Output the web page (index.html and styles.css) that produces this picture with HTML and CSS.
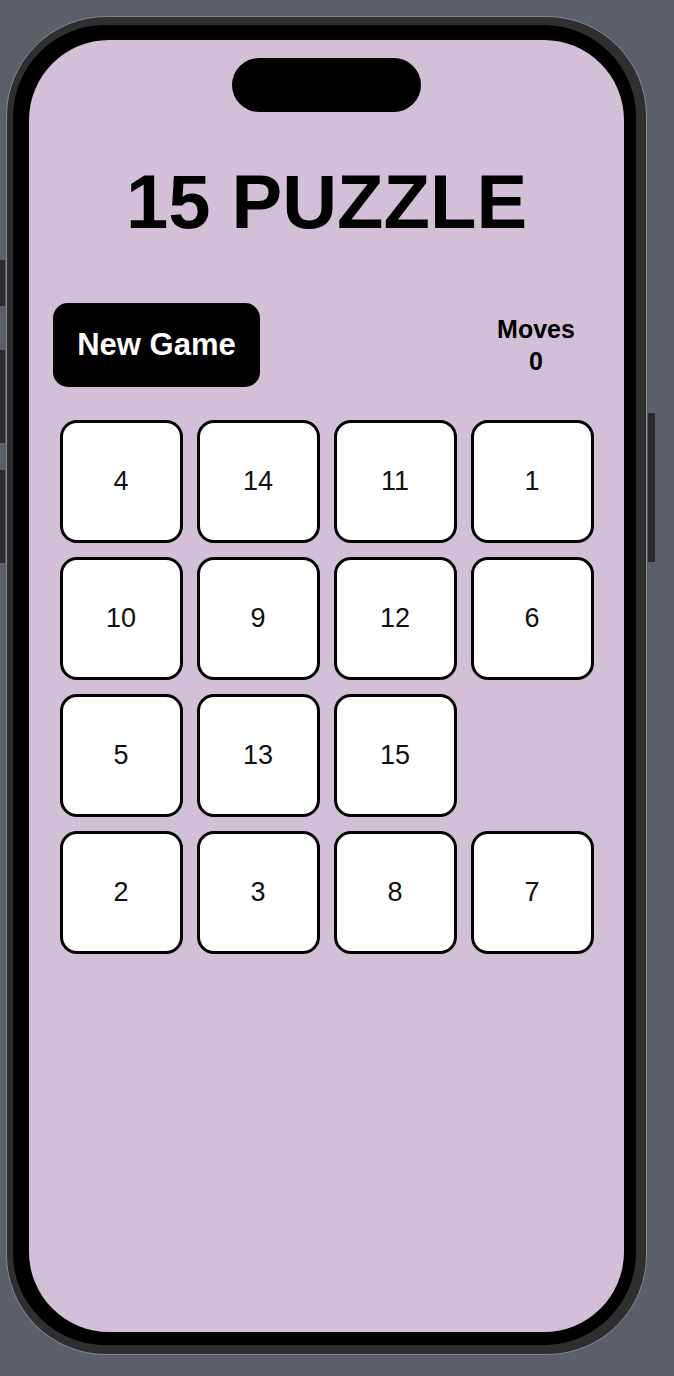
FILE: index.html
```html
<!DOCTYPE html>
<html lang="en">
<head>
  <meta charset="UTF-8">
  <meta name="viewport" content="width=device-width, initial-scale=1.0">
  <title>15 Puzzle</title>
  <link rel="stylesheet" href="styles.css">
</head>
<body>
  <div class="phone">
    <!-- side buttons -->
    <span class="side-btn left-1"></span>
    <span class="side-btn left-2"></span>
    <span class="side-btn left-3"></span>
    <span class="side-btn right-1"></span>

    <div class="bezel">
      <div class="screen">
        <div class="island"></div>

        <h1 class="title">15 PUZZLE</h1>

        <div class="top-row">
          <button class="new-game">New Game</button>
          <div class="moves">
            <div>Moves</div>
            <div>0</div>
          </div>
        </div>

        <div class="board">
          <div class="tile">4</div>
          <div class="tile">14</div>
          <div class="tile">11</div>
          <div class="tile">1</div>
          <div class="tile">10</div>
          <div class="tile">9</div>
          <div class="tile">12</div>
          <div class="tile">6</div>
          <div class="tile">5</div>
          <div class="tile">13</div>
          <div class="tile">15</div>
          <div class="tile empty"></div>
          <div class="tile">2</div>
          <div class="tile">3</div>
          <div class="tile">8</div>
          <div class="tile">7</div>
        </div>
      </div>
    </div>
  </div>
</body>
</html>
```

FILE: styles.css
```css
body {
  margin: 0;
  background-color: #5b5f67;
  font-family: "Liberation Sans", Arial, sans-serif;
}
.phone {
  position: relative;
  box-sizing: border-box;
  width: 641px;
  height: 1339px;
  margin: 16px 0 0 6px;
  padding: 8px 10px 9px 6px;
  background-color: #2f2f31;
  border: 1px solid #85888e;
  border-radius: 100px;
}
.bezel {
  box-sizing: border-box;
  height: 100%;
  padding: 15px 12px 13px 16px;
  background-color: #000;
  border-radius: 92px;
}
.screen {
  height: 100%;
  background-color: #d3bfd7;
  border-radius: 80px;
  overflow: hidden;
}
.side-btn {
  position: absolute;
  width: 5px;
  background-color: #2c2c2e;
}
.left-1 { left: -7px; top: 243px; height: 46px; }
.left-2 { left: -7px; top: 333px; height: 93px; }
.left-3 { left: -7px; top: 453px; height: 93px; }
.right-1 { right: -9px; top: 396px; height: 149px; width: 7px; }

.island {
  width: 189px;
  height: 54px;
  margin: 18px auto 0;
  background-color: #000;
  border-radius: 27px;
}
.title {
  margin: 52px 0 0;
  font-size: 76px;
  line-height: 76px;
  font-weight: bold;
  text-align: center;
  color: #000;
}
.top-row {
  display: flex;
  justify-content: space-between;
  align-items: center;
  padding: 0 24px;
  margin-top: 63px;
}
.new-game {
  width: 207px;
  height: 84px;
  padding: 0;
  background-color: #000;
  color: #fff;
  border: none;
  border-radius: 15px;
  font-family: inherit;
  font-size: 31px;
  font-weight: bold;
  cursor: pointer;
}
.moves {
  width: 128px;
  text-align: center;
  font-size: 25px;
  line-height: 32px;
  font-weight: bold;
  color: #000;
}
.board {
  display: grid;
  grid-template-columns: repeat(4, 123px);
  grid-auto-rows: 123px;
  gap: 14px;
  justify-content: center;
  margin-top: 33px;
}
.tile {
  display: flex;
  align-items: center;
  justify-content: center;
  box-sizing: border-box;
  background-color: #fff;
  border: 3px solid #000;
  border-radius: 17px;
  font-size: 27px;
  color: #111;
}
.tile.empty {
  visibility: hidden;
}
```
